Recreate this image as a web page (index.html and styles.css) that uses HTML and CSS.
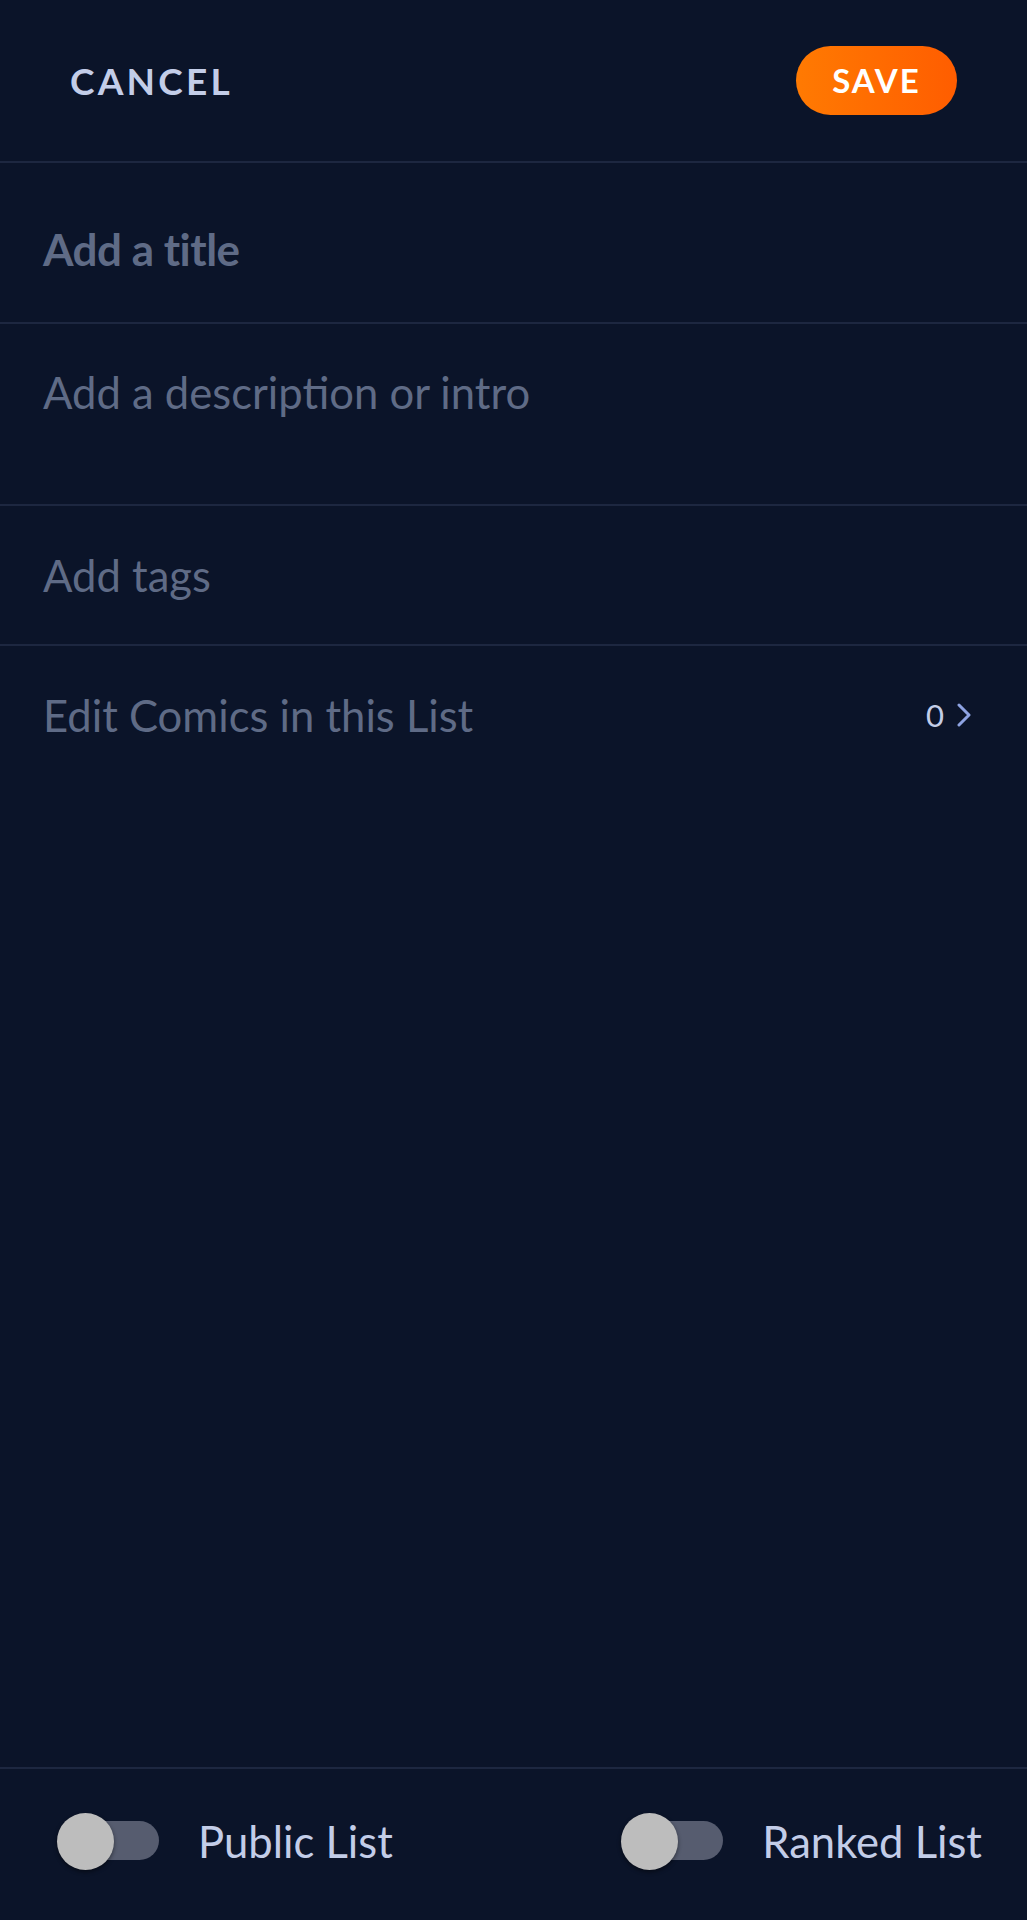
FILE: index.html
```html
<!DOCTYPE html>
<html lang="en">
<head>
<meta charset="utf-8">
<title>Edit List</title>
<link rel="stylesheet" href="styles.css">
</head>
<body>
<div class="screen">
  <header class="topbar">
    <button class="cancel">CANCEL</button>
    <button class="save">SAVE</button>
  </header>
  <div class="row row-title"><span class="title-ph">Add a title</span></div>
  <div class="row row-desc"><span class="ph">Add a description or intro</span></div>
  <div class="row row-tags"><span class="ph">Add tags</span></div>
  <div class="row row-comics">
    <span class="ph">Edit Comics in this List</span>
    <span class="count">0
      <svg class="chev" width="16" height="24" viewBox="0 0 16 24"><polyline points="3,2 13,12 3,22" fill="none" stroke="#8ea3e2" stroke-width="3" stroke-linecap="round" stroke-linejoin="round"/></svg>
    </span>
  </div>
  <div class="spacer"></div>
  <footer class="footer">
    <div class="toggle-item">
      <span class="switch"><span class="track"></span><span class="knob"></span></span>
      <span class="toggle-label">Public List</span>
    </div>
    <div class="toggle-item">
      <span class="switch"><span class="track"></span><span class="knob"></span></span>
      <span class="toggle-label">Ranked List</span>
    </div>
  </footer>
</div>
</body>
</html>
```
FILE: styles.css
```css
html, body {
  margin: 0;
  padding: 0;
  background: #0b1429;
}
body {
  font-family: Lato, "Open Sans", sans-serif;
}
.screen {
  width: 1027px;
  height: 1920px;
  display: flex;
  flex-direction: column;
  background: #0b1429;
}
.topbar {
  flex: 0 0 auto;
  display: flex;
  align-items: center;
  justify-content: space-between;
  padding: 0 70px;
  border-bottom: 2px solid #1d2740;
  box-sizing: border-box;
  height: 163px;
}
.cancel {
  background: none;
  border: none;
  padding: 0;
  font-family: Lato, sans-serif;
  font-weight: 700;
  font-size: 37px;
  letter-spacing: 3.2px;
  color: #c3cde8;
  margin-top: 0;
}
.save {
  width: 161px;
  height: 69px;
  border: none;
  border-radius: 35px;
  background: linear-gradient(90deg, #ff7a02 0%, #ff5d00 100%);
  color: #ffffff;
  font-family: Lato, sans-serif;
  font-weight: 700;
  font-size: 33px;
  letter-spacing: 2px;
  padding: 0;
  margin-top: -1px;
}
.row {
  display: flex;
  align-items: center;
  padding: 0 55px 0 43px;
  border-bottom: 2px solid #1d2740;
  box-sizing: border-box;
  flex: 0 0 auto;
}
.row-title { height: 161px; }
.row-desc { height: 182px; align-items: flex-start; padding-top: 42px; }
.row-tags { height: 140px; }
.row-comics { height: 144px; border-bottom: none; justify-content: space-between; padding-bottom: 6px; }
.title-ph {
  font-weight: 700;
  font-size: 44px;
  letter-spacing: -0.5px;
  color: #5f6b86;
  margin-top: 12px;
}
.ph {
  font-weight: 400;
  font-size: 43.6px;
  color: #5f6b86;
}
.count {
  display: flex;
  align-items: center;
  gap: 12px;
  font-size: 31px;
  color: #c3cde8;
}
.chev { display: block; }
.spacer { flex: 1 1 auto; }
.footer {
  flex: 0 0 auto;
  height: 153px;
  border-top: 2px solid #1d2740;
  box-sizing: border-box;
  display: flex;
  align-items: center;
  justify-content: space-between;
  padding: 0 45px 8px 57px;
}
.toggle-item {
  display: flex;
  align-items: center;
  gap: 39px;
}
.switch {
  position: relative;
  width: 102px;
  height: 56px;
  display: block;
}
.track {
  position: absolute;
  left: 4px;
  right: 0;
  top: 8px;
  height: 39px;
  border-radius: 20px;
  background: #565c6f;
}
.knob {
  position: absolute;
  left: 0;
  top: 0;
  width: 57px;
  height: 57px;
  border-radius: 50%;
  background: #bdbdbd;
  box-shadow: 0 2px 4px rgba(0,0,0,0.45);
}
.toggle-label {
  font-size: 43.6px;
  color: #c3cde8;
}
```
